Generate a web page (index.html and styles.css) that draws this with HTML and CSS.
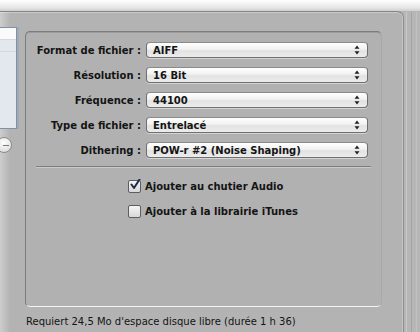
FILE: index.html
```html
<!DOCTYPE html>
<html lang="fr">
<head>
<meta charset="utf-8">
<link rel="stylesheet" href="styles.css">
</head>
<body>
<div class="screen">
  <div class="topfade"></div>
  <div class="main">
    <div class="outer">
      <div class="side">
        <div class="list">
          <div class="list-row first"></div>
          <div class="list-row"></div>
        </div>
        <div class="roundbtn"><span class="dash"></span></div>
      </div>
      <div class="content">
        <div class="group">
          <div class="form">
            <div class="label">Format de fichier :</div>
            <div class="popup"><span>AIFF</span><svg class="arrows" width="6" height="10" viewBox="0 0 6 10"><path d="M3 0.5 L5.5 3.8 H0.5 Z M3 9.5 L5.5 6.2 H0.5 Z" fill="#222"/></svg></div>
            <div class="label">Résolution :</div>
            <div class="popup"><span>16 Bit</span><svg class="arrows" width="6" height="10" viewBox="0 0 6 10"><path d="M3 0.5 L5.5 3.8 H0.5 Z M3 9.5 L5.5 6.2 H0.5 Z" fill="#222"/></svg></div>
            <div class="label">Fréquence :</div>
            <div class="popup"><span>44100</span><svg class="arrows" width="6" height="10" viewBox="0 0 6 10"><path d="M3 0.5 L5.5 3.8 H0.5 Z M3 9.5 L5.5 6.2 H0.5 Z" fill="#222"/></svg></div>
            <div class="label">Type de fichier :</div>
            <div class="popup"><span>Entrelacé</span><svg class="arrows" width="6" height="10" viewBox="0 0 6 10"><path d="M3 0.5 L5.5 3.8 H0.5 Z M3 9.5 L5.5 6.2 H0.5 Z" fill="#222"/></svg></div>
            <div class="label">Dithering :</div>
            <div class="popup"><span>POW-r #2 (Noise Shaping)</span><svg class="arrows" width="6" height="10" viewBox="0 0 6 10"><path d="M3 0.5 L5.5 3.8 H0.5 Z M3 9.5 L5.5 6.2 H0.5 Z" fill="#222"/></svg></div>
          </div>
          <div class="sep"></div>
          <div class="checks">
            <div class="check"><span class="box on"><svg width="12" height="12" viewBox="0 0 12 12"><path d="M2.5 5.5 L5 9 L10.5 0.5" fill="none" stroke="#1d2b4a" stroke-width="2" stroke-linecap="round" stroke-linejoin="round"/></svg></span><span class="ctext">Ajouter au chutier Audio</span></div>
            <div class="check"><span class="box"></span><span class="ctext">Ajouter à la librairie iTunes</span></div>
          </div>
        </div>
        <div class="footer">Requiert 24,5 Mo d'espace disque libre (durée 1 h 36)</div>
      </div>
    </div>
    <div class="chrome">
      <div class="vline a"></div>
      <div class="vline b"></div>
      <div class="vline c"></div>
    </div>
  </div>
</div>
</body>
</html>
```

FILE: styles.css
```css
* { box-sizing: border-box; }
html, body { margin: 0; padding: 0; }
body {
  width: 420px;
  height: 332px;
  overflow: hidden;
  background: #b2b2b2;
  font-family: "DejaVu Sans", Verdana, sans-serif;
  color: #141414;
}
.screen {
  display: flex;
  flex-direction: column;
  width: 420px;
  height: 332px;
}
.topfade {
  height: 11px;
  background: linear-gradient(#ffffff, #e6e6e6 70%, #cfcfcf);
}
.main {
  flex: 1;
  display: flex;
}
.outer {
  width: 404px;
  display: flex;
  border-top: 1px solid #858585;
  border-right: 1px solid #8e8e8e;
  border-top-right-radius: 7px;
  background: #b3b3b3;
  box-shadow: inset 0 1px 0 #c9c9c9, inset -1px 0 0 #c4c4c4;
}
.side {
  width: 25px;
  padding-top: 15px;
  display: flex;
  flex-direction: column;
  background: linear-gradient(90deg, rgba(255,255,255,0.35), rgba(255,255,255,0) 10px);
}
.list {
  width: 17px;
  height: 102px;
  border: 1px solid #7f93a8;
  border-left: none;
  background: #e3e8ee;
  box-shadow: 2px 0 0 #a3a9b0;
}
.list-row {
  height: 12px;
  border-bottom: 1px solid #d2d8de;
}
.list-row.first { background: #fafafa; }
.roundbtn {
  margin-top: 8px;
  margin-left: -4px;
  width: 16px;
  height: 16px;
  border-radius: 50%;
  border: 1px solid #8c8c8c;
  background: radial-gradient(circle at 50% 35%, #ffffff, #d4d4d4);
  display: flex;
  align-items: center;
  justify-content: center;
}
.dash {
  width: 6px;
  height: 1px;
  margin-left: 3px;
  background: #777;
}
.content {
  width: 357px;
  display: flex;
  flex-direction: column;
  padding-top: 19px;
}
.group {
  height: 276px;
  border: 1px solid #7c7c7c;
  border-bottom-color: #f4f4f4;
  border-right-color: #a8a8a8;
  border-radius: 5px;
  background: #b1b1b1;
  box-shadow: inset 0 1px 0 #9c9c9c;
  padding-top: 10px;
}
.form {
  display: grid;
  grid-template-columns: 115px 222px;
  column-gap: 5px;
  row-gap: 9px;
  align-items: center;
}
.label {
  text-align: right;
  font-weight: bold;
  font-size: 10px;
  white-space: nowrap;
}
.popup {
  height: 16px;
  display: flex;
  align-items: center;
  justify-content: space-between;
  padding: 0 6px 0 6px;
  border: 1px solid #6f6f6f;
  border-top-color: #8a8a8a;
  border-radius: 4px;
  background: linear-gradient(#ffffff, #f1f1f1 45%, #e2e2e2 55%, #ececec);
  box-shadow: 0 1px 0 rgba(255,255,255,0.45);
  font-weight: bold;
  font-size: 10px;
  white-space: nowrap;
}
.arrows { display: block; margin-right: 1px; }
.sep {
  margin: 8px 10px 0 10px;
  height: 2px;
  border-top: 1px solid #7d7d7d;
  border-bottom: 1px solid #cacaca;
}
.checks {
  margin-top: 11px;
  padding-left: 102px;
  display: flex;
  flex-direction: column;
  gap: 11px;
}
.check {
  display: flex;
  align-items: center;
  height: 14px;
}
.box {
  width: 13px;
  height: 13px;
  border: 1px solid #5e5e5e;
  border-radius: 2px;
  background: linear-gradient(#f6f6f6, #d8d8d8);
  margin-right: 4px;
  position: relative;
}
.box svg {
  position: absolute;
  left: 0;
  top: -2px;
}
.ctext {
  font-weight: bold;
  font-size: 10px;
  white-space: nowrap;
}
.footer {
  margin-top: 9px;
  padding-left: 1px;
  font-size: 10px;
  white-space: nowrap;
}
.chrome {
  flex: 1;
  display: flex;
  padding-top: 1px;
  gap: 0;
  background: #b6b6b6;
}
.vline { width: 1px; }
.vline.a { margin-left: 2px; background: #c8c8c8; }
.vline.b { margin-left: 4px; background: #a4a4a4; }
.vline.c { margin-left: 4px; background: #c2c2c2; }
```
